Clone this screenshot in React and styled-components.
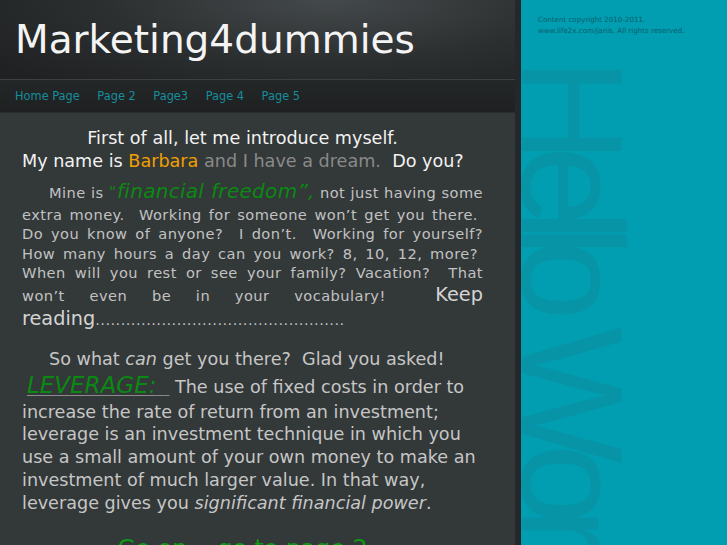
import React from "react";
import styled, { createGlobalStyle } from "styled-components";

const Global = createGlobalStyle`
  html, body { margin: 0; padding: 0; background: #2a2d2e; }
  body { font-family: "DejaVu Sans", Verdana, sans-serif; overflow: hidden; }
`;

const Page = styled.div`
  display: flex;
  width: 727px;
  height: 545px;
  overflow: hidden;
`;

const LeftColumn = styled.div`
  width: 515px;
  flex-shrink: 0;
  display: flex;
  flex-direction: column;
  border-right: 6px solid #25282a;
  background: #333839;
`;

const Header = styled.header`
  flex-shrink: 0;
  height: 79px;
  box-sizing: border-box;
  padding: 16px 0 0 15px;
  background: radial-gradient(ellipse 420px 110px at 330px 0px, #44494b 0%, #2c2f30 55%, #1f2122 100%);
`;

const Title = styled.h1`
  margin: 0;
  font-family: "DejaVu Sans", sans-serif;
  font-weight: normal;
  font-size: 39px;
  line-height: 47px;
  color: #f4f4f4;
`;

const Nav = styled.nav`
  flex-shrink: 0;
  height: 34px;
  box-sizing: border-box;
  border-top: 1px solid #3c4041;
  border-bottom: 1px solid #2a2d2e;
  background: linear-gradient(#242728, #1e2021);
  display: flex;
  align-items: center;
  gap: 17.5px;
  padding: 0 0 1px 15px;
`;

const NavLink = styled.a`
  font-size: 11.4px;
  color: #168d9c;
  text-decoration: none;
`;

const Content = styled.main`
  flex: 1;
  min-height: 0;
  overflow: hidden;
  padding: 14px 32px 0 22px;
  color: #c4c4c4;
`;

const Intro = styled.p`
  margin: 0;
  padding-right: 20px;
  white-space: nowrap;
  text-align: center;
  font-size: 17.6px;
  line-height: 23px;
  color: #f2f2f2;
`;

const Tone = styled.span`
  color: ${(p) => p.$c};
`;

const Justified = styled.p`
  margin: 5px 0 0;
  text-align: justify;
  font-size: 14.6px;
  line-height: 1.335;
  letter-spacing: 0.45px;
  text-indent: 27px;
  color: #c2c2c2;
`;

const GreenPhrase = styled.em`
  color: #0a8a12;
  font-size: 20px;
  letter-spacing: 0.3px;
`;

const Quote = styled.span`
  color: #0a8a12;
  font-size: 15px;
`;

const Keep = styled.span`
  font-size: 19.3px;
  line-height: 1.25;
  letter-spacing: 0;
  color: #d4d4d4;
`;

const Second = styled.div`
  margin-top: 17px;
  font-size: 17.6px;
  line-height: 1.3;
  color: #c6c6c6;
`;

const Lead = styled.p`
  margin: 0;
  padding-left: 27px;
`;

const Body2 = styled.p`
  margin: 0;
`;

const Term = styled.span`
  color: #8a8a8a;
  text-decoration: underline;
  text-decoration-thickness: 1px;
  text-underline-offset: 2px;
  margin-left: 5px;
`;

const TermWord = styled.em`
  color: #0a8a12;
  font-size: 23px;
`;

const GoOn = styled.p`
  margin: 18px 0 0;
  padding-right: 20px;
  text-align: center;
  font-size: 23.7px;
  line-height: 1.3;
  color: #0e9a12;
`;

const Side = styled.aside`
  flex: 1;
  background: #019db1;
  overflow: hidden;
  display: flex;
  flex-direction: column;
  align-items: flex-start;
`;

const Copyright = styled.div`
  padding: 14px 0 0 17px;
  font-size: 7.1px;
  line-height: 11px;
  color: #0d5d69;
`;

const BigWord = styled.div`
  margin: 22px 0 0 -22px;
  writing-mode: vertical-rl;
  text-orientation: sideways;
  font-family: "Liberation Sans", Arial, sans-serif;
  font-size: 145px;
  line-height: 145px;
  letter-spacing: -17px;
  color: #0894a7;
  white-space: nowrap;
`;

export default function App() {
  return (
    <>
      <Global />
      <Page>
        <LeftColumn>
          <Header>
            <Title>Marketing4dummies</Title>
          </Header>
          <Nav>
            <NavLink href="#">Home Page</NavLink>
            <NavLink href="#">Page 2</NavLink>
            <NavLink href="#">Page3</NavLink>
            <NavLink href="#">Page 4</NavLink>
            <NavLink href="#">Page 5</NavLink>
          </Nav>
          <Content>
            <Intro>
              First of all, let me introduce myself.
              <br />
              My name is <Tone $c="#f0a000">Barbara</Tone>{" "}
              <Tone $c="#8a8a8a">and I have a dream.</Tone>{"\u00a0 "}Do you?
            </Intro>
            <Justified>
              Mine is <Quote>“</Quote>
              <GreenPhrase>financial freedom”,</GreenPhrase> not just having some extra money.{"\u00a0 "}Working for
              someone won’t get you there.{"\u00a0 "}Do you know of anyone?{"\u00a0 "}I don’t.{"\u00a0 "}Working for
              yourself? How many hours a day can you work? 8, 10, 12, more?{"\u00a0 "}When will you rest or see
              your family? Vacation?{"\u00a0 "}That won’t even be in your vocabulary!{"\u00a0 "}
              <Keep>Keep reading</Keep>
              .................................................
            </Justified>
            <Second>
              <Lead>
                So what <em>can</em> get you there?{"\u00a0 "}Glad you asked!
              </Lead>
              <Body2>
                <Term>
                  <TermWord>LEVERAGE:{"\u00a0"}</TermWord>
                  {"\u00a0"}
                </Term>{" "}
                The use of fixed costs in order to increase the rate of return from an investment; leverage is an
                investment technique in which you use a small amount of your own money to make an investment of much
                larger value. In that way, leverage gives you <em>significant financial power</em>.
              </Body2>
            </Second>
            <GoOn>Go on... go to page 2</GoOn>
          </Content>
        </LeftColumn>
        <Side>
          <Copyright>
            Content copyright 2010-2011.
            <br />
            www.life2x.com/janis. All rights reserved.
          </Copyright>
          <BigWord>Hello World</BigWord>
        </Side>
      </Page>
    </>
  );
}
